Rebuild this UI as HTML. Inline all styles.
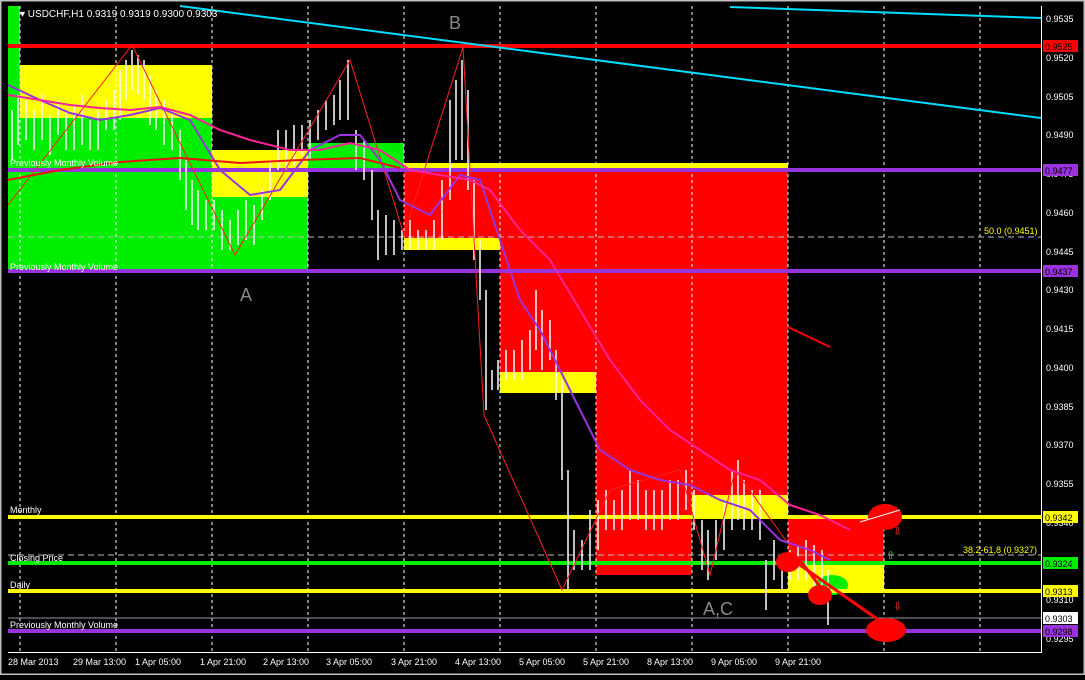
<!DOCTYPE html><html><head><style>
body{margin:0;background:#000;width:1085px;height:675px;overflow:hidden;font-family:"Liberation Sans",sans-serif}
svg text{font-family:"Liberation Sans",sans-serif}
</style></head><body>
<svg width="1085" height="675" xmlns="http://www.w3.org/2000/svg">
<rect width="1085" height="675" fill="#000"/>
<rect x="0" y="0" width="1085" height="675" fill="none" stroke="#c0c0c0" stroke-width="3"/>
<!-- zones -->
<rect x="8" y="6" width="12" height="264" fill="#00ee00"/>
<rect x="20" y="65" width="192" height="53" fill="#ffff00"/>
<rect x="20" y="118" width="192" height="152" fill="#00ee00"/>
<rect x="212" y="150" width="96" height="47" fill="#ffff00"/>
<rect x="212" y="197" width="96" height="73" fill="#00ee00"/>
<rect x="308" y="143" width="96" height="27" fill="#00ee00"/>
<rect x="404" y="163" width="96" height="6" fill="#ffff00"/>
<rect x="404" y="169" width="96" height="69" fill="#ff0000"/>
<rect x="404" y="238" width="96" height="12" fill="#ffff00"/>
<rect x="500" y="163" width="288" height="6" fill="#ffff00"/>
<rect x="500" y="169" width="96" height="203" fill="#ff0000"/>
<rect x="500" y="372" width="96" height="21" fill="#ffff00"/>
<rect x="596" y="169" width="192" height="326" fill="#ff0000"/>
<rect x="596" y="495" width="96" height="80" fill="#ff0000"/>
<rect x="692" y="495" width="96" height="22" fill="#ffff00"/>
<rect x="788" y="517" width="96" height="48" fill="#ff0000"/>
<rect x="788" y="565" width="96" height="25" fill="#ffff00"/>
<ellipse cx="832" cy="585" rx="16" ry="10" fill="#00ee00"/>
<!-- grid -->
<g stroke="#fff" stroke-dasharray="3,3" stroke-width="1">
<path d="M20 6V652M116 6V652M212 6V652M308 6V652M404 6V652M500 6V652M596 6V652M692 6V652M788 6V652M884 6V652M980 6V652"/>
</g>
<g stroke="#bbb" stroke-dasharray="6,4"><path d="M8 237H1041M8 555H1041"/></g>
<!-- lines -->
<rect x="8" y="44" width="1033" height="4" fill="#ff0000"/>
<rect x="8" y="168" width="1033" height="4" fill="#9933dd"/>
<rect x="8" y="269" width="1033" height="4" fill="#9933dd"/>
<rect x="8" y="515" width="1033" height="4" fill="#ffff00"/>
<rect x="8" y="561" width="1033" height="4" fill="#00ee00"/>
<rect x="8" y="589" width="1033" height="4" fill="#ffff00"/>
<rect x="8" y="629" width="1033" height="4" fill="#9933dd"/>
<path d="M8 618H1041" stroke="#8899aa"/>
<path d="M180 6L1041 118M730 7L1041 18" stroke="#00ddff" stroke-width="2"/>
<path d="M788 327L830 347" stroke="#ff0000" stroke-width="2"/>
<!-- price bars -->
<g stroke="#fff" stroke-width="1.5">
<path d="M12 110v50M18 95v50M26 100v40M34 110v40M42 95v45M50 115v40M58 100v35M66 110v40M74 105v45M82 95v50M90 120v30M98 110v40M106 100v30M114 90v40M120 70v50M126 60v40M132 50v40M138 55v40M144 60v40M150 75v50M156 90v40M164 100v45M172 110v40M180 130v50M186 160v50M192 180v45M198 190v40M206 200v30M214 200v30M222 210v40M230 220v30M238 210v35M246 200v40M254 205v40M262 190v30M270 160v40M278 130v40M286 130v40M294 125v40M302 125v30M310 120v40M318 110v30M326 100v30M334 95v30M340 80v40M348 60v60M356 130v40M364 140v40M372 170v50M378 210v50M386 215v40M394 220v35M402 230v20M410 220v30M418 230v20M426 230v20M434 220v30M442 180v60M450 100v100M456 80v80M462 60v100M468 90v100M474 180v80M480 240v60M486 290v120M492 370v20M498 360v30M506 350v30M514 350v30M522 340v40M530 330v40M536 290v60M542 310v60M550 320v40M556 350v50M562 380v100M568 470v120M574 530v40M582 540v30M590 510v60M598 500v50M606 490v40M614 500v30M622 490v40M630 470v50M638 480v40M646 490v40M654 490v40M662 490v40M670 480v40M678 480v40M686 470v40M694 490v40M702 520v50M708 530v50M716 520v40M724 500v50M732 470v60M738 460v60M744 480v50M752 490v40M760 490v50M766 560v50M774 540v40M782 560v30M790 550v30M798 545v35M806 540v40M814 545v45M822 550v45M828 570v55"/>
</g>
<!-- zigzag -->
<polyline fill="none" stroke="#ff2020" stroke-width="1" points="8,205 132,45 235,255 350,60 404,235 463,47 484,415 562,590 610,490 680,470 710,575 735,470 800,560"/>
<!-- MAs -->
<polyline fill="none" stroke="#9933dd" stroke-width="2" points="8,85 40,100 70,113 100,120 130,115 160,108 190,120 220,170 250,195 280,190 310,150 340,135 360,135 380,160 400,200 430,215 460,175 480,180 500,240 520,300 540,330 570,390 600,450 630,470 660,480 690,485 720,500 750,510 780,540 810,550 830,560"/>
<polyline fill="none" stroke="#ff2299" stroke-width="2" points="8,95 40,100 70,105 100,108 130,110 160,107 190,115 220,130 250,140 290,150 320,150 350,143 380,150 410,170 440,175 470,180 490,190 520,230 550,260 580,310 610,360 640,400 670,430 700,450 730,470 760,480 790,505 820,515 850,530"/>
<polyline fill="none" stroke="#ee1111" stroke-width="2" points="8,180 60,170 120,162 180,158 240,163 300,160 360,158 400,168"/>
<!-- arrows & ellipses -->
<ellipse cx="885" cy="517" rx="17" ry="13" fill="#ff0000"/>
<ellipse cx="886" cy="630" rx="20" ry="12" fill="#ff0000"/>
<ellipse cx="788" cy="562" rx="12" ry="10" fill="#ff0000"/>
<ellipse cx="820" cy="595" rx="12" ry="10" fill="#ff0000"/>
<path d="M790 558L890 628M800 560L830 600" stroke="#ff0000" stroke-width="3"/>
<path d="M860 522L900 510" stroke="#fff" stroke-width="1"/>
<text x="893" y="535" fill="#ff3333" font-size="11">⇩</text>
<text x="893" y="610" fill="#ff3333" font-size="11">⇩</text>
<text x="886" y="559" fill="#00ee00" font-size="11">⇧</text>
<!-- texts -->
<g fill="#fff" font-size="9">
<text x="10" y="166">Previously Monthly Volume</text>
<text x="10" y="270">Previously Monthly Volume</text>
<text x="10" y="513">Monthly</text>
<text x="10" y="561">Closing Price</text>
<text x="10" y="588">Daily</text>
<text x="10" y="628">Previously Monthly Volume</text>
<text x="20" y="17" font-size="10">▾ USDCHF,H1  0.9319 0.9319 0.9300 0.9303</text>
</g>
<text x="984" y="234" fill="#ffff00" font-size="9">50.0 (0.9451)</text>
<text x="963" y="553" fill="#ffff00" font-size="9">38.2-61,8 (0.9327)</text>
<g fill="#888" font-size="18"><text x="449" y="29">B</text><text x="240" y="301">A</text><text x="703" y="615">A,C</text></g>
<!-- axis -->
<rect x="1041" y="6" width="1" height="646" fill="#fff"/>
<rect x="8" y="652" width="1034" height="1" fill="#fff"/>
<g fill="#fff" font-size="9">
<text x="1046" y="22">0.9535</text><text x="1046" y="61">0.9520</text><text x="1046" y="100">0.9505</text><text x="1046" y="138">0.9490</text><text x="1046" y="177">0.9475</text><text x="1046" y="216">0.9460</text><text x="1046" y="255">0.9445</text><text x="1046" y="293">0.9430</text><text x="1046" y="332">0.9415</text><text x="1046" y="371">0.9400</text><text x="1046" y="410">0.9385</text><text x="1046" y="448">0.9370</text><text x="1046" y="487">0.9355</text><text x="1046" y="526">0.9340</text><text x="1046" y="603">0.9310</text><text x="1046" y="642">0.9295</text>
</g>
<g font-size="9">
<rect x="1043" y="40" width="35" height="12" fill="#ff0000"/><text x="1045" y="50" fill="#000">0.9525</text>
<rect x="1043" y="164" width="35" height="12" fill="#9933dd"/><text x="1045" y="174" fill="#000">0.9477</text>
<rect x="1043" y="265" width="35" height="12" fill="#9933dd"/><text x="1045" y="275" fill="#000">0.9437</text>
<rect x="1043" y="511" width="35" height="12" fill="#ffff00"/><text x="1045" y="521" fill="#000">0.9342</text>
<rect x="1043" y="557" width="35" height="12" fill="#00ee00"/><text x="1045" y="567" fill="#000">0.9324</text>
<rect x="1043" y="585" width="35" height="12" fill="#ffff00"/><text x="1045" y="595" fill="#000">0.9313</text>
<rect x="1043" y="612" width="35" height="12" fill="#fff"/><text x="1045" y="622" fill="#000">0.9303</text>
<rect x="1043" y="625" width="35" height="12" fill="#9933dd"/><text x="1045" y="635" fill="#000">0.9298</text>
</g>
<g fill="#fff" font-size="9">
<text x="8" y="665">28 Mar 2013</text><text x="73" y="665">29 Mar 13:00</text><text x="135" y="665">1 Apr 05:00</text><text x="200" y="665">1 Apr 21:00</text><text x="263" y="665">2 Apr 13:00</text><text x="326" y="665">3 Apr 05:00</text><text x="391" y="665">3 Apr 21:00</text><text x="455" y="665">4 Apr 13:00</text><text x="519" y="665">5 Apr 05:00</text><text x="583" y="665">5 Apr 21:00</text><text x="647" y="665">8 Apr 13:00</text><text x="711" y="665">9 Apr 05:00</text><text x="775" y="665">9 Apr 21:00</text>
</g>
</svg>
</body></html>
